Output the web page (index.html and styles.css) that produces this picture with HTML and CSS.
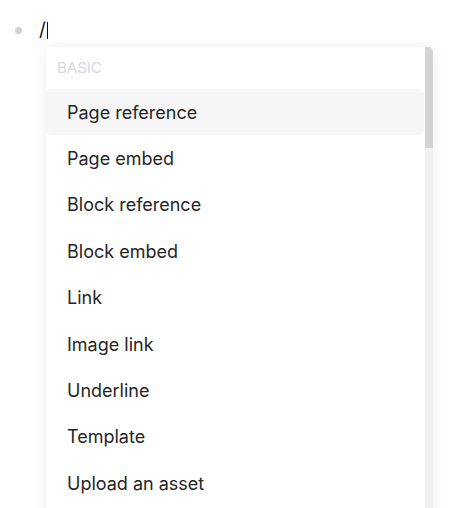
FILE: index.html
```html
<!DOCTYPE html>
<html>
<head>
<meta charset="utf-8">
<link rel="stylesheet" href="styles.css">
</head>
<body>
<div class="editor">
  <div class="block">
    <span class="bullet"></span>
    <span class="content">/<span class="caret"></span></span>
  </div>
  <div class="popup">
    <div class="list">
      <div class="group">BASIC</div>
      <div class="item active">Page reference</div>
      <div class="item">Page embed</div>
      <div class="item">Block reference</div>
      <div class="item">Block embed</div>
      <div class="item">Link</div>
      <div class="item">Image link</div>
      <div class="item">Underline</div>
      <div class="item">Template</div>
      <div class="item">Upload an asset</div>
    </div>
    <div class="track"><div class="thumb"></div></div>
  </div>
</div>
</body>
</html>
```
FILE: styles.css
```css
html, body {
  margin: 0;
  padding: 0;
  background: #ffffff;
  font-family: Inter, "Noto Sans", sans-serif;
  color: #1f1f1f;
  overflow: hidden;
  height: 508px;
}
.editor {
  position: relative;
  height: 508px;
}
.block {
  display: flex;
  align-items: center;
  height: 26px;
  padding-top: 17px;
  padding-left: 15px;
}
.bullet {
  width: 7px;
  height: 7px;
  border-radius: 50%;
  background: #d1d1d1;
  margin-right: 17px;
}
.content {
  display: flex;
  align-items: center;
  font-size: 19px;
  line-height: 18px;
  color: #111;
}
.caret {
  display: inline-block;
  width: 1px;
  height: 17px;
  background: #111;
  margin-left: 1px;
}
.popup {
  position: absolute;
  left: 46px;
  top: 47px;
  width: 387px;
  height: 480px;
  display: flex;
  background: #fff;
  border-radius: 5px;
  box-shadow: 0 0 14px rgba(0, 0, 0, 0.07);
  overflow: hidden;
}
.list {
  flex: 1;
  display: flex;
  flex-direction: column;
  padding-right: 1px;
}
.group {
  flex: none;
  height: 42px;
  box-sizing: border-box;
  padding-left: 11px;
  padding-top: 12px;
  font-size: 15px;
  line-height: 18px;
  color: #d0d8e2;
}
.item {
  flex: none;
  height: 46.375px;
  display: flex;
  align-items: center;
  padding-left: 21px;
  font-size: 18px;
  color: #252525;
  border-radius: 5px;
}
.item.active {
  background: #f6f6f6;
}
.track {
  width: 8px;
  background: #f0f0f0;
}
.thumb {
  height: 101px;
  background: #d4d4d4;
}
```
